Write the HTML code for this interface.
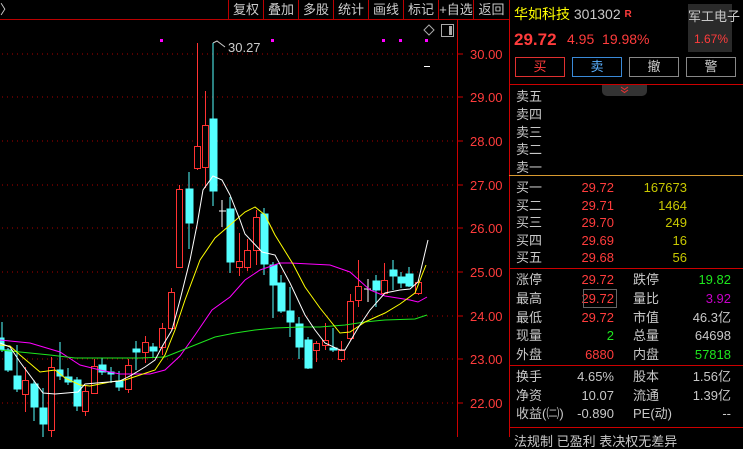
<!DOCTYPE html>
<html><head><meta charset="utf-8"><style>
body{margin:0;background:#000;width:743px;height:437px;overflow:hidden;font-family:"Liberation Sans","Noto Sans CJK SC",sans-serif;position:relative}
.t{position:absolute;white-space:nowrap;font-size:13px;line-height:15px}
.top{position:absolute;top:0;height:19px;border-left:1px solid #b00;color:#ccc;font-size:13px;line-height:19px;text-align:center}
.g{color:#c8c8c8}.r{color:#ff3c3c}.y{color:#c8c800}.gr{color:#1ee61e}.m{color:#c800c8}
.hl{position:absolute;left:509px;width:234px;height:1px;background:#c00}
.btn{position:absolute;top:57px;height:20px;width:50px;box-sizing:border-box;border:1px solid #888;font-size:13px;line-height:18px;text-align:center;color:#ccc}
</style></head><body>
<svg width="743" height="437" style="position:absolute;left:0;top:0">
<line x1="0" y1="19.5" x2="509" y2="19.5" stroke="#b00"/>
<line x1="457.5" y1="19" x2="457.5" y2="437" stroke="#c00"/>
<line x1="509.5" y1="0" x2="509.5" y2="437" stroke="#c00"/>
<g stroke="#a00" stroke-dasharray="1,4">
<line x1="2" y1="54" x2="457" y2="54"/><line x1="2" y1="97" x2="457" y2="97"/><line x1="2" y1="141" x2="457" y2="141"/><line x1="2" y1="185" x2="457" y2="185"/><line x1="2" y1="228" x2="457" y2="228"/><line x1="2" y1="272" x2="457" y2="272"/><line x1="2" y1="316" x2="457" y2="316"/><line x1="2" y1="359" x2="457" y2="359"/><line x1="2" y1="403" x2="457" y2="403"/>
</g>
<g stroke="#c00"><line x1="457" y1="54" x2="463" y2="54"/><line x1="457" y1="97" x2="463" y2="97"/><line x1="457" y1="141" x2="463" y2="141"/><line x1="457" y1="185" x2="463" y2="185"/><line x1="457" y1="228" x2="463" y2="228"/><line x1="457" y1="272" x2="463" y2="272"/><line x1="457" y1="316" x2="463" y2="316"/><line x1="457" y1="359" x2="463" y2="359"/><line x1="457" y1="403" x2="463" y2="403"/></g>
<g fill="#f0f" ><rect x="160" y="39" width="3" height="3"/><rect x="271" y="39" width="3" height="3"/><rect x="382" y="39" width="3" height="3"/><rect x="399" y="39" width="3" height="3"/><rect x="425" y="39" width="3" height="3"/></g>
<path d="M429 25 L434 30 L429 35 L424 30 Z" fill="none" stroke="#aaa"/>
<rect x="441.5" y="24.5" width="12" height="12" fill="none" stroke="#aaa"/><rect x="449" y="26" width="3" height="9" fill="#aaa"/>
<line x1="424" y1="66.5" x2="430" y2="66.5" stroke="#fff"/>
<path d="M213 43 L217 41 L225 47" fill="none" stroke="#ccc"/>
<g stroke="#54ffff" fill="#54ffff">
<line x1="2" y1="322" x2="2" y2="352"/><rect x="0" y="338" width="4" height="12"/>
<line x1="8" y1="348" x2="8" y2="372"/><rect x="5" y="350" width="7" height="20"/>
<line x1="17" y1="345" x2="17" y2="392"/><rect x="14" y="376" width="7" height="13"/>
<line x1="34" y1="380" x2="34" y2="421"/><rect x="31" y="384" width="7" height="23"/>
<line x1="43" y1="388" x2="43" y2="437"/><rect x="40" y="408" width="7" height="16"/>
<line x1="60" y1="342" x2="60" y2="380"/><rect x="57" y="370" width="6" height="6"/>
<line x1="68" y1="368" x2="68" y2="385"/><rect x="65" y="377" width="7" height="5"/>
<line x1="77" y1="377" x2="77" y2="411"/><rect x="74" y="380" width="7" height="26"/>
<line x1="102" y1="358" x2="102" y2="375"/><rect x="99" y="365" width="7" height="7"/>
<line x1="111" y1="367" x2="111" y2="383"/><rect x="108" y="372" width="6" height="2"/>
<line x1="119" y1="371" x2="119" y2="391"/><rect x="116" y="381" width="7" height="6"/>
<line x1="136" y1="341" x2="136" y2="370"/><rect x="133" y="349" width="7" height="3"/>
<line x1="153" y1="343" x2="153" y2="358"/><rect x="150" y="347" width="7" height="4"/>
<line x1="189" y1="172" x2="189" y2="249"/><rect x="186" y="189" width="7" height="34"/>
<line x1="213" y1="43" x2="213" y2="206"/><rect x="210" y="119" width="7" height="72"/>
<line x1="230" y1="197" x2="230" y2="273"/><rect x="227" y="209" width="7" height="53"/>
<line x1="264" y1="208" x2="264" y2="275"/><rect x="261" y="214" width="7" height="50"/>
<line x1="273" y1="262" x2="273" y2="318"/><rect x="270" y="265" width="7" height="20"/>
<line x1="281" y1="275" x2="281" y2="313"/><rect x="278" y="283" width="7" height="28"/>
<line x1="290" y1="287" x2="290" y2="337"/><rect x="287" y="311" width="7" height="11"/>
<line x1="299" y1="317" x2="299" y2="359"/><rect x="296" y="324" width="7" height="23"/>
<line x1="308" y1="337" x2="308" y2="369"/><rect x="305" y="340" width="7" height="28"/>
<line x1="333" y1="328" x2="333" y2="352"/><rect x="330" y="348" width="7" height="2"/>
<line x1="376" y1="275" x2="376" y2="307"/><rect x="373" y="281" width="7" height="9"/>
<line x1="393" y1="260" x2="393" y2="290"/><rect x="390" y="270" width="7" height="6"/>
<line x1="401" y1="272" x2="401" y2="288"/><rect x="398" y="277" width="7" height="6"/>
<line x1="409" y1="267" x2="409" y2="287"/><rect x="406" y="274" width="7" height="12"/>
</g>
<g stroke="#fff"><line x1="222" y1="200" x2="222" y2="227"/><line x1="219" y1="211" x2="226" y2="211"/><line x1="368" y1="279" x2="368" y2="302"/><line x1="364" y1="289" x2="371" y2="289"/></g>
<g stroke="#ff3232" fill="#000">
<line x1="25.5" y1="367" x2="25.5" y2="412"/><rect x="22.5" y="380.5" width="6" height="14"/>
<line x1="51.5" y1="357" x2="51.5" y2="437"/><rect x="48.5" y="367.5" width="6" height="63"/>
<line x1="85.5" y1="385" x2="85.5" y2="416"/><rect x="82.5" y="391.5" width="6" height="20"/>
<line x1="94.5" y1="359" x2="94.5" y2="394"/><rect x="91.5" y="366.5" width="6" height="27"/>
<line x1="128.5" y1="359" x2="128.5" y2="393"/><rect x="125.5" y="365.5" width="6" height="24"/>
<line x1="145.5" y1="336" x2="145.5" y2="363"/><rect x="142.5" y="342.5" width="6" height="10"/>
<line x1="162.5" y1="323" x2="162.5" y2="355"/><rect x="159.5" y="328.5" width="6" height="19"/>
<line x1="171.5" y1="288" x2="171.5" y2="330"/><rect x="168.5" y="292.5" width="6" height="36"/>
<line x1="179.5" y1="185" x2="179.5" y2="268"/><rect x="176.5" y="189.5" width="6" height="78"/>
<line x1="197.5" y1="43" x2="197.5" y2="170"/><rect x="194.5" y="146.5" width="6" height="22"/>
<line x1="205.5" y1="91" x2="205.5" y2="188"/><rect x="202.5" y="125.5" width="6" height="42"/>
<line x1="239.5" y1="233" x2="239.5" y2="276"/><rect x="236.5" y="261.5" width="6" height="6"/>
<line x1="247.5" y1="239" x2="247.5" y2="271"/><rect x="244.5" y="250.5" width="6" height="17"/>
<line x1="256.5" y1="210" x2="256.5" y2="265"/><rect x="253.5" y="217.5" width="6" height="33"/>
<line x1="316.5" y1="341" x2="316.5" y2="362"/><rect x="313.5" y="343.5" width="6" height="7"/>
<line x1="325.5" y1="323" x2="325.5" y2="350"/><rect x="322.5" y="340.5" width="6" height="5"/>
<line x1="341.5" y1="341" x2="341.5" y2="362"/><rect x="338.5" y="350.5" width="6" height="9"/>
<line x1="350.5" y1="294" x2="350.5" y2="340"/><rect x="347.5" y="301.5" width="6" height="37"/>
<line x1="358.5" y1="260" x2="358.5" y2="307"/><rect x="355.5" y="286.5" width="6" height="14"/>
<line x1="384.5" y1="263" x2="384.5" y2="293"/><rect x="381.5" y="280.5" width="6" height="13"/>
<line x1="418.5" y1="280" x2="418.5" y2="295"/><rect x="415.5" y="282.5" width="6" height="11"/>
</g>
<g fill="none" stroke-width="1">
<polyline stroke="#f0f" points="0,340 30,343 60,352 80,365 100,370 120,374 150,374 165,370 180,356 195,335 212,310 230,297 245,280 260,270 280,263 290,263 330,265 350,272 370,290 385,296 410,300 418,302 427,297"/>
<polyline stroke="#1ee61e" points="0,350 20,352 50,355 75,358 140,358 165,357 175,353 195,345 215,337 235,333 255,330 275,328 300,327 320,327 345,325 365,322 385,320 415,319 427,315"/>
<polyline stroke="#ffff00" points="0,345 10,346 20,355 40,372 55,370 65,378 80,385 90,386 110,382 125,380 140,375 155,370 165,355 175,330 185,300 200,260 215,238 230,225 245,212 255,207 265,215 275,235 293,264 305,287 320,308 340,333 350,332 365,322 385,313 400,304 415,293 422,275 426,265"/>
<polyline stroke="#fff" points="0,343 10,347 20,362 43,393 55,394 78,392 85,384 120,381 130,376 145,367 155,360 163,345 172,330 180,300 190,260 197,225 203,190 213,176 222,180 230,195 240,220 245,234 262,252 275,255 290,283 305,315 315,330 325,343 340,350 345,350 358,328 370,310 385,293 400,290 410,289 418,282 428,240"/>
</g>
</svg>
<div class="t" style="left:0;top:2px;color:#ccc">〉</div>
<div class="top" style="left:228px;width:34px">复权</div>
<div class="top" style="left:263px;width:34px">叠加</div>
<div class="top" style="left:298px;width:34px">多股</div>
<div class="top" style="left:333px;width:34px">统计</div>
<div class="top" style="left:368px;width:34px">画线</div>
<div class="top" style="left:403px;width:34px">标记</div>
<div class="top" style="left:438px;width:34px">+自选</div>
<div class="top" style="left:473px;width:35px;border-right:1px solid #b00">返回</div>
<div class="t" style="left:228px;top:40px;color:#ccc">30.27</div>
<div class="t r" style="left:470px;top:47px">30.00</div>
<div class="t r" style="left:470px;top:90px">29.00</div>
<div class="t r" style="left:470px;top:134px">28.00</div>
<div class="t r" style="left:470px;top:178px">27.00</div>
<div class="t r" style="left:470px;top:221px">26.00</div>
<div class="t r" style="left:470px;top:265px">25.00</div>
<div class="t r" style="left:470px;top:309px">24.00</div>
<div class="t r" style="left:470px;top:352px">23.00</div>
<div class="t r" style="left:470px;top:396px">22.00</div>

<div class="t" style="left:514px;top:7px;font-size:14px"><span style="color:#ffff00">华如科技</span> <span class="g">301302</span> <span class="r" style="font-size:10px;font-weight:bold;vertical-align:top">R</span></div>
<div style="position:absolute;left:688px;top:4px;width:44px;height:48px;background:#2a2a2a"></div>
<div class="t g" style="left:688px;top:9px">军工电子</div>
<div class="t r" style="left:694px;top:32px;font-size:12px">1.67%</div>
<div class="t r" style="left:514px;top:31px;font-size:17px;font-weight:bold;line-height:18px">29.72</div>
<div class="t r" style="left:567px;top:32px;font-size:14px">4.95&nbsp; 19.98%</div>
<div class="btn" style="left:515px;border-color:#e03030;color:#ff3c3c">买</div>
<div class="btn" style="left:572px;border-color:#3a8ad8;color:#5ab0ff">卖</div>
<div class="btn" style="left:629px">撤</div>
<div class="btn" style="left:686px">警</div>
<div class="hl" style="top:84px"></div>
<div style="position:absolute;left:602px;top:85px;width:45px;height:11px;background:#333;border-radius:0 0 5px 5px"></div>
<svg width="743" height="437" style="position:absolute;left:0;top:0"><path d="M621 87 L624.5 89.5 L628 87 M621 90 L624.5 92.5 L628 90" fill="none" stroke="#e33"/></svg>
<div class="t g" style="left:516px;top:88px;line-height:17.8px">卖五<br>卖四<br>卖三<br>卖二<br>卖一</div>
<div class="hl" style="top:175px;background:#d89a30"></div>
<div class="t g" style="left:516px;top:179px;line-height:17.5px">买一<br>买二<br>买三<br>买四<br>买五</div>
<div class="t r" style="left:540px;width:74px;text-align:right;top:179px;line-height:17.5px">29.72<br>29.71<br>29.70<br>29.69<br>29.68</div>
<div class="t y" style="left:610px;width:77px;text-align:right;top:179px;line-height:17.5px">167673<br>1464<br>249<br>16<br>56</div>
<div class="hl" style="top:268px"></div>
<div class="t g" style="left:516px;top:271px;line-height:18.8px">涨停<br>最高<br>最低<br>现量<br>外盘</div>
<div class="t" style="left:540px;width:74px;text-align:right;top:271px;line-height:18.8px"><span class="r">29.72</span><br><span class="r">29.72</span><br><span class="r">29.72</span><br><span class="gr">2</span><br><span class="r">6880</span></div>
<div style="position:absolute;left:583px;top:289px;width:32px;height:17px;border:1px solid #666"></div>
<div class="t g" style="left:633px;top:271px;line-height:18.8px">跌停<br>量比<br>市值<br>总量<br>内盘</div>
<div class="t" style="left:660px;width:71px;text-align:right;top:271px;line-height:18.8px"><span class="gr">19.82</span><br><span class="m">3.92</span><br><span class="g">46.3亿</span><br><span class="g">64698</span><br><span class="gr">57818</span></div>
<div class="hl" style="top:365px"></div>
<div class="t g" style="left:516px;top:368px;line-height:18.5px">换手<br>净资<br>收益(㈡)</div>
<div class="t g" style="left:540px;width:74px;text-align:right;top:368px;line-height:18.5px">4.65%<br>10.07<br>-0.890</div>
<div class="t g" style="left:633px;top:368px;line-height:18.5px">股本<br>流通<br>PE(动)</div>
<div class="t g" style="left:660px;width:71px;text-align:right;top:368px;line-height:18.5px">1.56亿<br>1.39亿<br>--</div>
<div class="hl" style="top:427px"></div>
<div class="t g" style="left:514px;top:434px">法规制 已盈利 表决权无差异</div>
</body></html>
